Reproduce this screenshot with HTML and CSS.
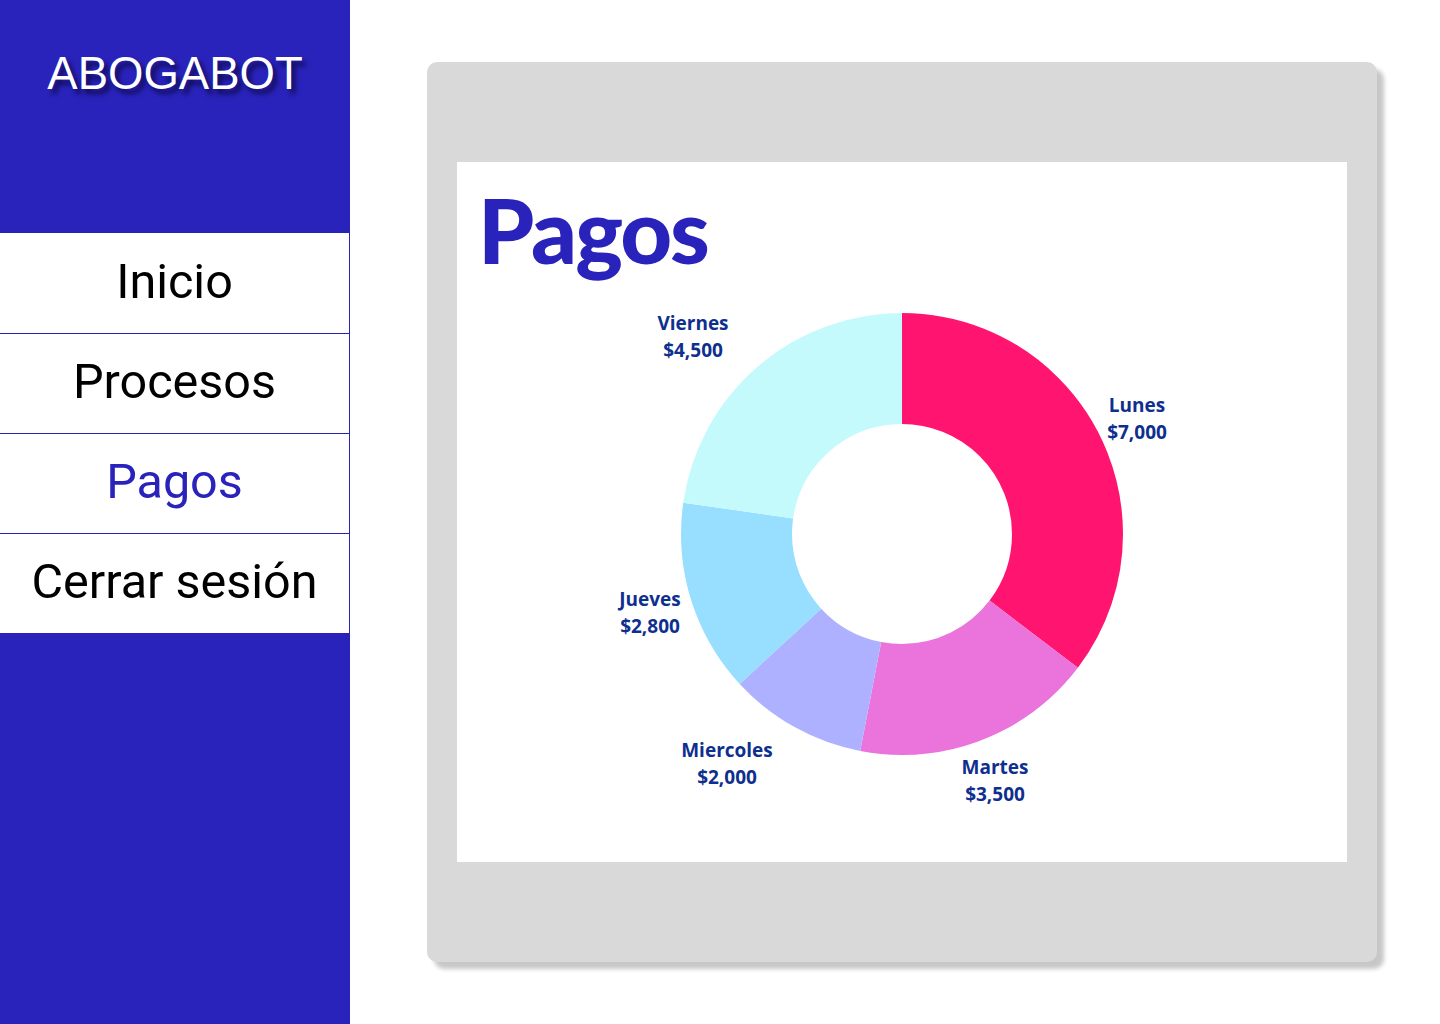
FILE: index.html
```html
<html>
<head>
    <title>Pagos - Abogabot</title>
    <link rel="stylesheet" href="styles.css">
</head>
<body>
    <div class="sidebar">
        <div class="brand">ABOGABOT</div>
        <nav class="menu">
            <a href="#" class="menu-item">Inicio</a>
            <a href="#" class="menu-item">Procesos</a>
            <a href="#" class="menu-item active">Pagos</a>
            <a href="#" class="menu-item">Cerrar sesión</a>
        </nav>
    </div>
    <div class="main">
        <div class="panel">
            <div class="card">
                <h1 class="card-title">Pagos</h1>
                <svg class="chart" width="890" height="560" viewBox="0 0 890 560">
                    <g transform="translate(445 254) rotate(-90)">
                        <circle r="165.5" fill="none" stroke="#ff1470" stroke-width="111" pathLength="19800" stroke-dasharray="7000 12800" stroke-dashoffset="0"/>
                        <circle r="165.5" fill="none" stroke="#ea73dc" stroke-width="111" pathLength="19800" stroke-dasharray="3500 16300" stroke-dashoffset="-7000"/>
                        <circle r="165.5" fill="none" stroke="#aeb1ff" stroke-width="111" pathLength="19800" stroke-dasharray="2000 17800" stroke-dashoffset="-10500"/>
                        <circle r="165.5" fill="none" stroke="#98dfff" stroke-width="111" pathLength="19800" stroke-dasharray="2800 17000" stroke-dashoffset="-12500"/>
                        <circle r="165.5" fill="none" stroke="#c5fafc" stroke-width="111" pathLength="19800" stroke-dasharray="4500 15300" stroke-dashoffset="-15300"/>
                    </g>
                    <g class="labels">
                        <text x="680" y="132">Lunes</text>
                        <text x="680" y="159">$7,000</text>
                        <text x="538" y="494">Martes</text>
                        <text x="538" y="521">$3,500</text>
                        <text x="270" y="477">Miercoles</text>
                        <text x="270" y="504">$2,000</text>
                        <text x="193" y="326">Jueves</text>
                        <text x="193" y="353">$2,800</text>
                        <text x="236" y="50">Viernes</text>
                        <text x="236" y="77">$4,500</text>
                    </g>
                </svg>
            </div>
        </div>
    </div>
</body>
</html>
```

FILE: styles.css
```css
body {
    margin: 0;
    padding: 0;
    display: flex;
    height: 1024px;
    background: #ffffff;
    font-family: Roboto, "Liberation Sans", sans-serif;
}
.sidebar {
    width: 350px;
    flex-shrink: 0;
    background-color: #2923bc;
    display: flex;
    flex-direction: column;
}
.brand {
    height: 233px;
    box-sizing: border-box;
    padding-top: 48px;
    text-align: center;
    color: #ffffff;
    font-family: "Liberation Sans", Arial, sans-serif;
    font-size: 45.5px;
    text-shadow: 4px 5px 5px rgba(10, 6, 60, 0.85);
}
.menu {
    width: 349px;
    display: flex;
    flex-direction: column;
}
.menu-item {
    display: flex;
    align-items: center;
    justify-content: center;
    height: 100px;
    padding-bottom: 4px;
    box-sizing: border-box;
    background-color: #ffffff;
    color: #000000;
    font-size: 48.5px;
    text-decoration: none;
}
.menu-item + .menu-item {
    border-top: 1px solid #2923bc;
}
.menu-item.active {
    color: #2923bc;
}
.main {
    flex: 1;
    padding: 62px 0 0 77px;
}
.panel {
    width: 950px;
    height: 900px;
    box-sizing: border-box;
    padding: 100px 30px;
    background-color: #d9d9d9;
    border-radius: 10px;
    box-shadow: 7px 7px 4px rgba(0, 0, 0, 0.22);
}
.card {
    height: 700px;
    background-color: #ffffff;
}
.card-title {
    margin: 0;
    padding: 22px 0 0 21px;
    height: 118px;
    box-sizing: border-box;
    color: #2923bc;
    font-family: Lato, sans-serif;
    font-weight: 900;
    font-size: 90px;
    line-height: 90px;
    letter-spacing: -2px;
}
.chart {
    display: block;
}
.labels text {
    font-family: "Open Sans", "Noto Sans", sans-serif;
    font-weight: 700;
    font-size: 19px;
    fill: #0f2f8e;
    text-anchor: middle;
}
```
